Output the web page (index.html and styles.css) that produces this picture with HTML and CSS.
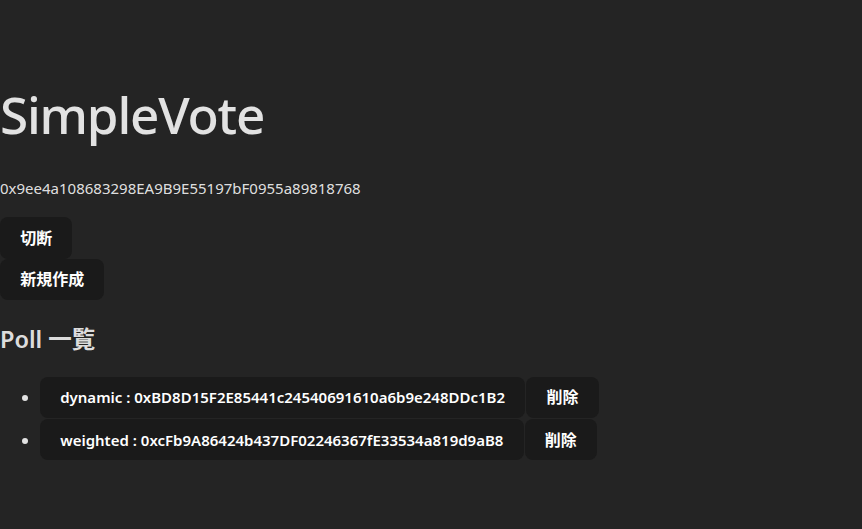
FILE: index.html
```html
<!DOCTYPE html>
<html lang="ja">
<head>
<meta charset="utf-8">
<title>SimpleVote</title>
<link rel="stylesheet" href="styles.css">
</head>
<body>
<div class="app">
  <h1 class="title">SimpleVote</h1>
  <p class="account">0x9ee4a108683298EA9B9E55197bF0955a89818768</p>
  <div><button class="btn btn-jp">切断</button></div>
  <div><button class="btn btn-jp">新規作成</button></div>
  <h2 class="subtitle">Poll 一覧</h2>
  <ul class="polls">
    <li class="poll"><button class="btn">dynamic : 0xBD8D15F2E85441c24540691610a6b9e248DDc1B2</button><button class="btn btn-jp">削除</button></li>
    <li class="poll"><button class="btn">weighted : 0xcFb9A86424b437DF02246367fE33534a819d9aB8</button><button class="btn btn-jp">削除</button></li>
  </ul>
</div>
</body>
</html>
```
FILE: styles.css
```css
html, body {
  margin: 0;
  padding: 0;
}
body {
  background: #242424;
  color: rgba(255, 255, 255, 0.87);
  font-family: "Noto Sans", "Noto Sans CJK JP", sans-serif;
  font-size: 16px;
  line-height: 1.5;
  min-height: 529px;
}
.app {
  padding-top: 52px;
}
.title {
  font-size: 51.2px;
  line-height: 1.1;
  font-weight: 500;
  margin: 34.3px 0;
  letter-spacing: -1.2px;
}
.account {
  margin: 0 0 18px;
  font-size: 15px;
}
.btn {
  display: inline-block;
  border-radius: 8px;
  border: 1px solid transparent;
  padding: 9.6px 19.2px;
  font-size: 15px;
  line-height: 20px;
  font-weight: 600;
  font-family: inherit;
  background: #1a1a1a;
  color: #ffffff;
  cursor: pointer;
}
.btn-jp {
  font-size: 16px;
}
.subtitle {
  font-size: 23.5px;
  font-weight: 600;
  line-height: 36px;
  margin: 21px 0 20px;
}
.polls {
  margin: 0;
  padding-left: 40px;
}
.poll {
  margin-bottom: 1px;
}
.poll .btn + .btn {
  margin-left: 1px;
}
```
